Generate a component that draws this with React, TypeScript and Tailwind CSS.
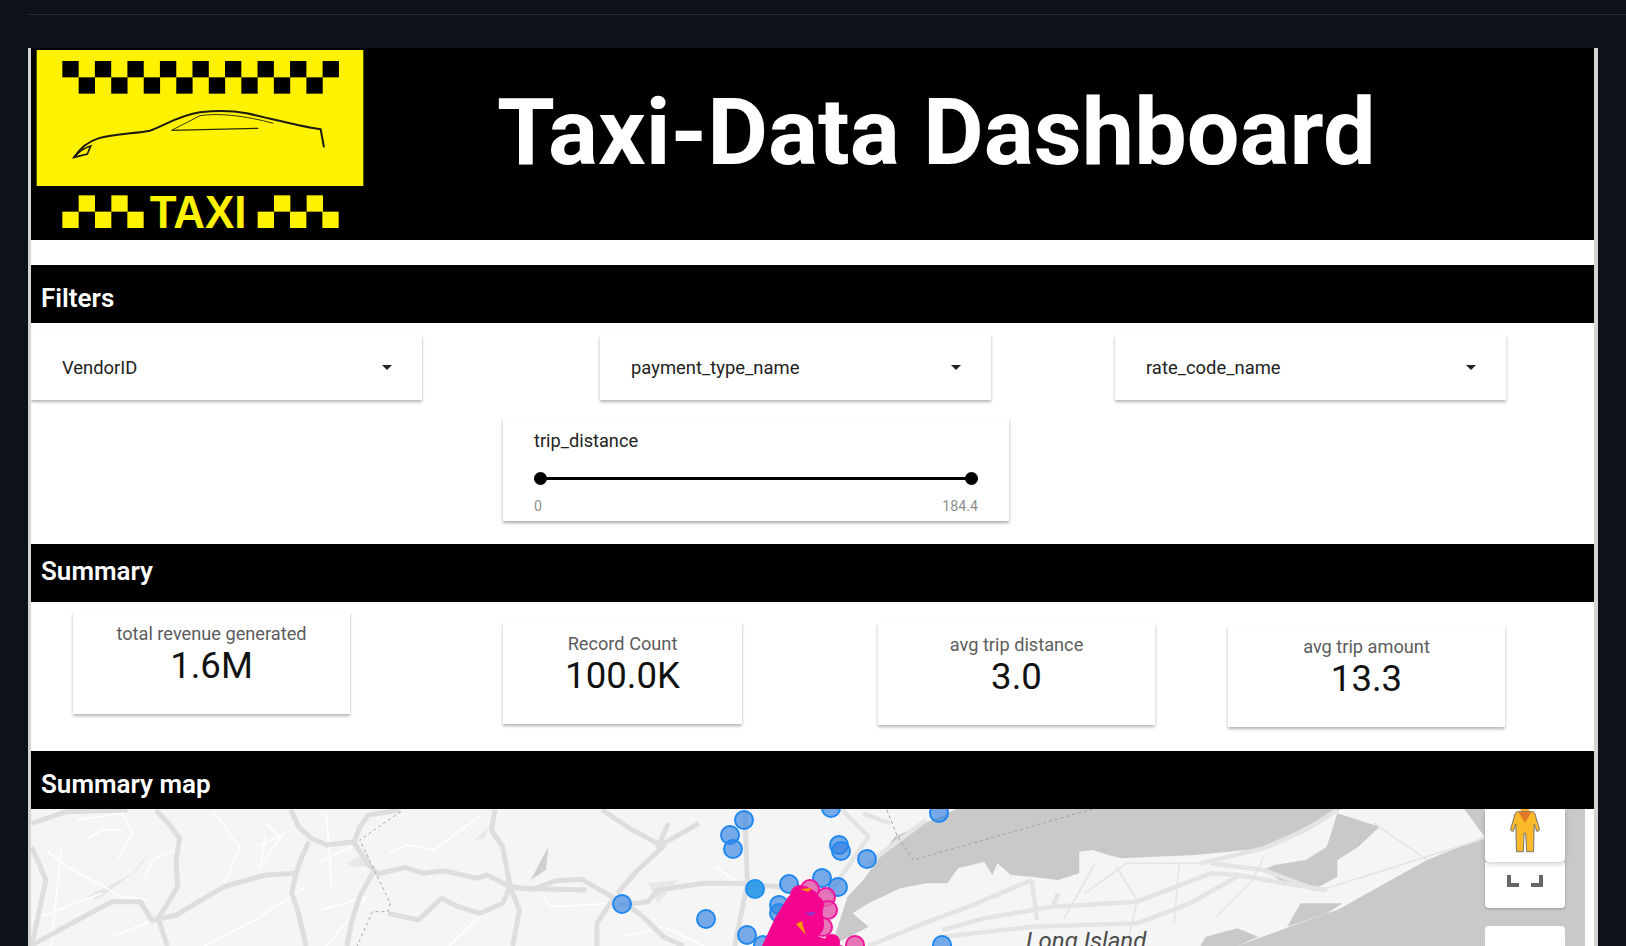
import React from "react"

const roboto = "font-['Roboto',sans-serif]"

const blueDots = [
  [744, 820], [730, 835], [733, 849], [831, 808], [839, 845], [841, 851], [867, 859], [755, 889],
  [789, 884], [822, 878], [838, 887], [779, 905], [779, 913], [706, 919], [747, 935], [763, 945],
  [622, 904], [939, 813], [942, 945],
]

const pinkDots = [
  [810, 889], [826, 897], [828, 910], [823, 927], [855, 945],
]

// roads traced off the left half of the map
const roadsWest = [
  "M305 90 L330 130 L352 175 L345 240 L348 320 L325 380 L310 415 L328 498",
  "M570 90 L585 140 L610 175 L640 195 L695 185 L705 140 L722 105 L785 90",
  "M695 190 L720 250 L740 282 L795 262 L830 280 L870 272 L935 295 L955 285 L1000 320 L1045 328 L1090 302 L1140 298 L1165 320 L1205 355",
  "M60 498 L140 430 L220 365 L275 365 L298 422 L345 405 L440 320 L520 285 L580 280 L592 230 L605 185",
  "M580 280 L572 340 L585 400 L600 498",
  "M730 280 L705 350 L690 420 L680 498",
  "M760 400 L820 420 L865 355 L895 378 L940 400 L985 370 L1000 320",
  "M970 90 L963 150 L985 200 L1000 320 L1018 390 L1005 498",
  "M1205 350 L1170 430 L1170 498",
  "M1225 370 L1260 410 L1300 470 L1340 498",
  "M1180 90 L1240 150 L1300 200 L1250 270 L1210 340",
  "M1310 130 L1290 200 L1370 130",
  "M1210 375 L1270 365 L1290 330 L1380 310 L1450 310 L1530 320",
  "M1460 90 L1465 310 L1440 498",
  "M62 200 L90 300 L62 498",
  "M62 130 L130 95 L250 90",
  "M1010 325 L1150 330",
]

const whiteWest = [
  "M90 210 L130 260 L240 350 L290 360",
  "M150 120 L240 100 L260 160 L230 240",
  "M420 100 L470 200 L440 310",
  "M520 170 L510 260 L560 150",
  "M760 220 L800 195 L850 210 L940 110",
  "M600 320 L500 420 L400 498",
  "M880 498 L960 380",
  "M1060 340 L1080 380 L1200 370",
  "M120 210 L100 498",
  "M630 390 L720 350 L640 498",
  "M170 180 L200 150 L240 150",
  "M500 200 L550 170 L520 130",
  "M625 245 L690 200",
  "M60 420 L200 340",
  "M220 470 L300 420",
  "M1220 470 L1300 440 L1380 498",
  "M1400 260 L1450 310",
  "M360 200 L300 240 L280 300",
  "M650 320 L640 100",
]

const roadsEast = [
  "M130 498 L235 430 L320 380 L380 340 L440 300",
  "M270 450 L350 415 L480 380 L640 365 L780 280 L830 285 L920 310 L1000 330",
  "M270 470 L440 440 L640 430 L740 370 L830 290",
  "M760 250 L880 205 L960 150 L1020 90",
  "M780 250 L880 270 L980 330",
  "M440 300 L450 420",
  "M480 380 L490 340",
  "M80 90 L130 170 L60 330",
  "M240 120 L180 190 L130 250",
  "M120 100 L170 130",
]

const thinEast = [
  "M1000 325 L1110 270 L1300 175",
  "M560 250 L500 420",
  "M600 260 L640 360 L620 498",
  "M880 230 L860 300 L790 410",
  "M1090 130 L1190 240",
  "M540 340 L620 250 L760 250",
  "M720 250 L710 430",
]

function Logo() {
  const top = [0, 1, 2, 3, 4, 5, 6, 7, 8]
  const second = [0, 1, 2, 3, 4, 5, 6, 7]
  return (
    <svg viewBox="93 144 1014 576" className="w-[338px] h-[192px] shrink-0">
      <rect x="93" y="144" width="1014" height="576" fill="#000" />
      <rect x="110" y="150" width="980" height="408" fill="#fff200" />
      {top.map((i) => (
        <rect key={i} x={187 + 97.6 * i} y="183" width="49" height="49" fill="#000" />
      ))}
      {second.map((i) => (
        <rect key={i} x={236 + 97.6 * i} y="232" width="49" height="49" fill="#000" />
      ))}
      {[236, 334, 822, 920].map((x) => (
        <rect key={x} x={x} y="586" width="49" height="49" fill="#fff200" />
      ))}
      {[187, 285, 382, 773, 870, 967].map((x) => (
        <rect key={x} x={x} y="635" width="49" height="49" fill="#fff200" />
      ))}
      <text
        x="449"
        y="684"
        fontSize="137"
        fontWeight="700"
        fontFamily="Liberation Sans, sans-serif"
        fill="#fff200"
        textLength="290"
        lengthAdjust="spacingAndGlyphs"
      >
        TAXI
      </text>
      <path
        d="M222 472 C240 445 262 425 295 415 C340 402 410 400 450 392 C490 378 540 345 600 337 C640 332 690 330 740 340 C800 352 880 375 962 388 L972 442"
        fill="none"
        stroke="#1a1a10"
        strokeWidth="6"
      />
      <path d="M222 472 L262 462 L272 438 C250 444 236 456 222 472 Z" fill="none" stroke="#1a1a10" strokeWidth="5" />
      <path d="M515 391 L600 347 C660 338 740 348 820 370" fill="none" stroke="#3a3a10" strokeWidth="3" />
      <path d="M515 391 L775 385" fill="none" stroke="#2a2a10" strokeWidth="4" />
    </svg>
  )
}

function Caret() {
  return <span className="w-0 h-0 border-x-[5px] border-x-transparent border-t-[5px] border-t-[#222]" />
}

function SectionBar({ title, className }: { title: string; className: string }) {
  return (
    <div
      className={`h-[58px] bg-black flex items-center pl-[10px] text-white text-[26px] font-semibold leading-none ${className}`}
    >
      {title}
    </div>
  )
}

function Dropdown({ label, className }: { label: string; className: string }) {
  return (
    <div
      className={`w-[391px] h-[65px] bg-white flex items-center justify-between pl-[31px] pr-[30px] text-[18.4px] text-[#222] shadow-[0_2px_3px_rgba(0,0,0,0.3)] ${className}`}
    >
      <span>{label}</span>
      <Caret />
    </div>
  )
}

function Kpi({ label, value, className }: { label: string; value: string; className: string }) {
  return (
    <div className={`h-[102px] bg-white flex flex-col items-center pt-[11px] shadow-[0_2px_3px_rgba(0,0,0,0.3)] ${className}`}>
      <div className="text-[18.2px] leading-[22px] text-[#5c5c5c]">{label}</div>
      <div className="text-[36.6px] leading-[42px] text-[#111]">{value}</div>
    </div>
  )
}

function TaxiMap() {
  return (
    <svg viewBox="31 809 1554 137" className="w-[1554px] h-[137px] block">
      <rect x="31" y="809" width="1554" height="137" fill="#f5f5f5" />

      <g transform="translate(0 780) scale(0.5102 0.3333)" fill="#e8e8e8">
        <path d="M170 350 L260 280 L300 200 L270 270 L190 360 Z" />
        <path d="M680 250 L720 215 L730 260 L690 260 Z" />
        <path d="M1040 300 L1075 200 L1070 270 Z" fill="#cfcfcf" />
        <path d="M930 180 L955 145 L950 175 Z" />
        <path d="M1270 310 L1330 300 L1290 370 Z" />
      </g>

      <g transform="translate(0 780) scale(0.5102 0.3333)" fill="none" strokeLinejoin="round">
        {whiteWest.map((d) => (
          <path key={d} d={d} stroke="#ffffff" strokeWidth="1.5" vectorEffect="non-scaling-stroke" />
        ))}
        {roadsWest.map((d) => (
          <path key={d} d={d} stroke="#dedede" strokeWidth="5" vectorEffect="non-scaling-stroke" />
        ))}
        <path
          d="M785 95 L705 180 L765 370 L760 395 L730 395 L700 498"
          stroke="#a8a8a8"
          strokeWidth="1"
          strokeDasharray="3 3"
          vectorEffect="non-scaling-stroke"
        />
      </g>

      <g transform="translate(800 780) scale(0.5268 0.3333)">
        <path
          d="M180 170 L300 85 L1030 85 L960 140 L880 205 L750 225 L610 235 L585 225 L555 210 L530 215 L530 280 L490 300 L440 290 L400 285 L375 250 L365 285 L350 245 L300 265 L280 310 L240 310 L190 325 L130 370 L100 400 L130 440 L60 498 L90 350 L120 300 Z"
          fill="#c9c9c9"
        />
        <path
          d="M1300 170 L1190 240 L1020 390 L1000 400 L830 498 L1490 498 L1490 85 L1260 85 L1290 150 Z"
          fill="#c9c9c9"
        />
        <path
          d="M1020 100 L1100 140 L1060 200 L1020 240 L1020 290 L985 320 L920 310 L880 270 L900 255 L960 240 L1000 200 Z"
          fill="#c9c9c9"
        />
        <path d="M925 440 L950 370 L1030 370 L1000 400 Z" fill="#c9c9c9" />
        <path d="M770 470 L830 445 L870 470 L830 498 L760 498 Z" fill="#c9c9c9" />
        <g fill="none" strokeLinejoin="round">
          {thinEast.map((d) => (
            <path key={d} d={d} stroke="#e4e4e4" strokeWidth="1.5" vectorEffect="non-scaling-stroke" />
          ))}
          {roadsEast.map((d) => (
            <path key={d} d={d} stroke="#e4e4e4" strokeWidth="4.5" vectorEffect="non-scaling-stroke" />
          ))}
          <path
            d="M165 90 L185 170 L215 240 L560 85"
            stroke="#a0a0a0"
            strokeWidth="1"
            strokeDasharray="3 3"
            vectorEffect="non-scaling-stroke"
          />
        </g>
      </g>

      {blueDots.map(([cx, cy]) => (
        <circle
          key={`${cx}-${cy}`}
          cx={cx}
          cy={cy}
          r="9"
          fill="#2f80e0"
          fillOpacity="0.65"
          stroke="#1e88f0"
          strokeWidth="2"
        />
      ))}
      <circle cx="755" cy="889" r="9" fill="#1e9be8" fillOpacity="0.7" />

      {pinkDots.map(([cx, cy]) => (
        <circle key={`${cx}-${cy}`} cx={cx} cy={cy} r="9" fill="#e35fae" fillOpacity="0.85" stroke="#f0139b" strokeWidth="2" />
      ))}
      <path
        d="M762 946 L775 918 L788 897 L795 890 L806 886 L816 892 L822 905 L824 925 L818 936 L843 946 Z"
        fill="#f5058f"
      />
      <circle cx="800" cy="895" r="10" fill="#f5058f" />
      <circle cx="814" cy="905" r="10" fill="#f5058f" />
      <circle cx="812" cy="925" r="12" fill="#f5058f" />
      <circle cx="832" cy="942" r="8" fill="#f5058f" />
      <path d="M796 924 L806 935 L803 926 L802 921 Z" fill="#ff9800" />
      <path d="M800 889 L812 888 L808 892 Z" fill="#ff9800" />
      <path d="M804 913 L816 912 L812 916 Z" fill="#8a3fd0" />

      <text x="1026" y="949" fontSize="24" fontStyle="italic" fontFamily="Roboto, sans-serif" fill="#4a4a4a">
        Long Island
      </text>
    </svg>
  )
}

function Pegman() {
  return (
    <svg viewBox="0 0 100 140" className="w-[36px] h-[46px]">
      <circle cx="50" cy="-2" r="14" fill="#fbb829" />
      <path
        d="M28 8 L72 8 Q78 8 80 14 L94 62 Q94 68 86 68 L78 46 L76 130 L55 130 L52 74 L47 74 L45 130 L24 130 L22 46 L14 68 Q6 68 6 62 L20 14 Q22 8 28 8 Z"
        fill="#fbb829"
        stroke="#757575"
        strokeWidth="3"
        strokeLinejoin="round"
      />
      <path d="M30 8 L70 8 L50 42 Z" fill="#e2792a" />
    </svg>
  )
}

function MapControls() {
  return (
    <div className="absolute left-[1454px] top-0 w-[80px] flex flex-col">
      <div className="h-[53px] bg-white rounded-b-[4px] flex justify-center shadow-[0_2px_5px_rgba(0,0,0,0.2)] relative z-10">
        <Pegman />
      </div>
      <div className="h-[46px] bg-white rounded-b-[4px] shadow-[0_1px_3px_rgba(0,0,0,0.25)] flex items-end justify-center gap-[12px] pb-[21px]">
        <span className="w-[12px] h-[12px] border-l-[4px] border-b-[4px] border-[#666]" />
        <span className="w-[12px] h-[12px] border-r-[4px] border-b-[4px] border-[#666]" />
      </div>
      <div className="mt-[18px] h-[40px] bg-white rounded-t-[4px]" />
    </div>
  )
}

export default function App() {
  return (
    <div className={`h-[946px] overflow-hidden bg-[#0d1119] ${roboto}`}>
      <div className="h-[48px] pt-[14px] pl-[28px]">
        <div className="h-px bg-[#262b33]" />
      </div>

      <div className="w-[1570px] ml-[28px] h-[898px] bg-white border-l-[3px] border-r-[4px] border-[#d4d4d4] overflow-hidden">
        <header className="h-[192px] bg-black flex">
          <Logo />
          <h1 className="ml-[128px] pt-[23px] text-[93.5px] leading-[122px] font-bold text-white whitespace-nowrap">
            Taxi-Data Dashboard
          </h1>
        </header>

        <div className="h-[25px]" />
        <SectionBar title="Filters" className="pt-[8px]" />

        <div className="pt-[12px] flex">
          <Dropdown label="VendorID" className="" />
          <Dropdown label="payment_type_name" className="ml-[178px]" />
          <Dropdown label="rate_code_name" className="ml-[124px]" />
        </div>

        <div className="ml-[472px] mt-[19px] w-[506px] h-[102px] bg-white px-[31px] pt-[11px] shadow-[0_2px_3px_rgba(0,0,0,0.35)]">
          <div className="text-[18.2px] leading-[22px] text-[#222]">trip_distance</div>
          <div className="mt-[20px] h-[13px] relative flex items-center">
            <div className="w-full h-[3px] bg-black" />
            <span className="absolute left-0 w-[13px] h-[13px] rounded-full bg-black" />
            <span className="absolute right-0 w-[13px] h-[13px] rounded-full bg-black" />
          </div>
          <div className="mt-[13px] flex justify-between text-[14.2px] leading-[16px] text-[#8e8e8e]">
            <span>0</span>
            <span>184.4</span>
          </div>
        </div>

        <div className="h-[23px]" />
        <SectionBar title="Summary" className="pb-[4px]" />

        <div className="h-[149px] flex items-start">
          <Kpi label="total revenue generated" value="1.6M" className="w-[277px] ml-[42px] mt-[10px]" />
          <Kpi label="Record Count" value="100.0K" className="w-[239px] ml-[153px] mt-[20px]" />
          <Kpi label="avg trip distance" value="3.0" className="w-[277px] ml-[136px] mt-[21px]" />
          <Kpi label="avg trip amount" value="13.3" className="w-[277px] ml-[73px] mt-[23px]" />
        </div>

        <SectionBar title="Summary map" className="pt-[8px]" />

        <div className="relative h-[137px] overflow-hidden">
          <TaxiMap />
          <MapControls />
        </div>
      </div>
    </div>
  )
}
